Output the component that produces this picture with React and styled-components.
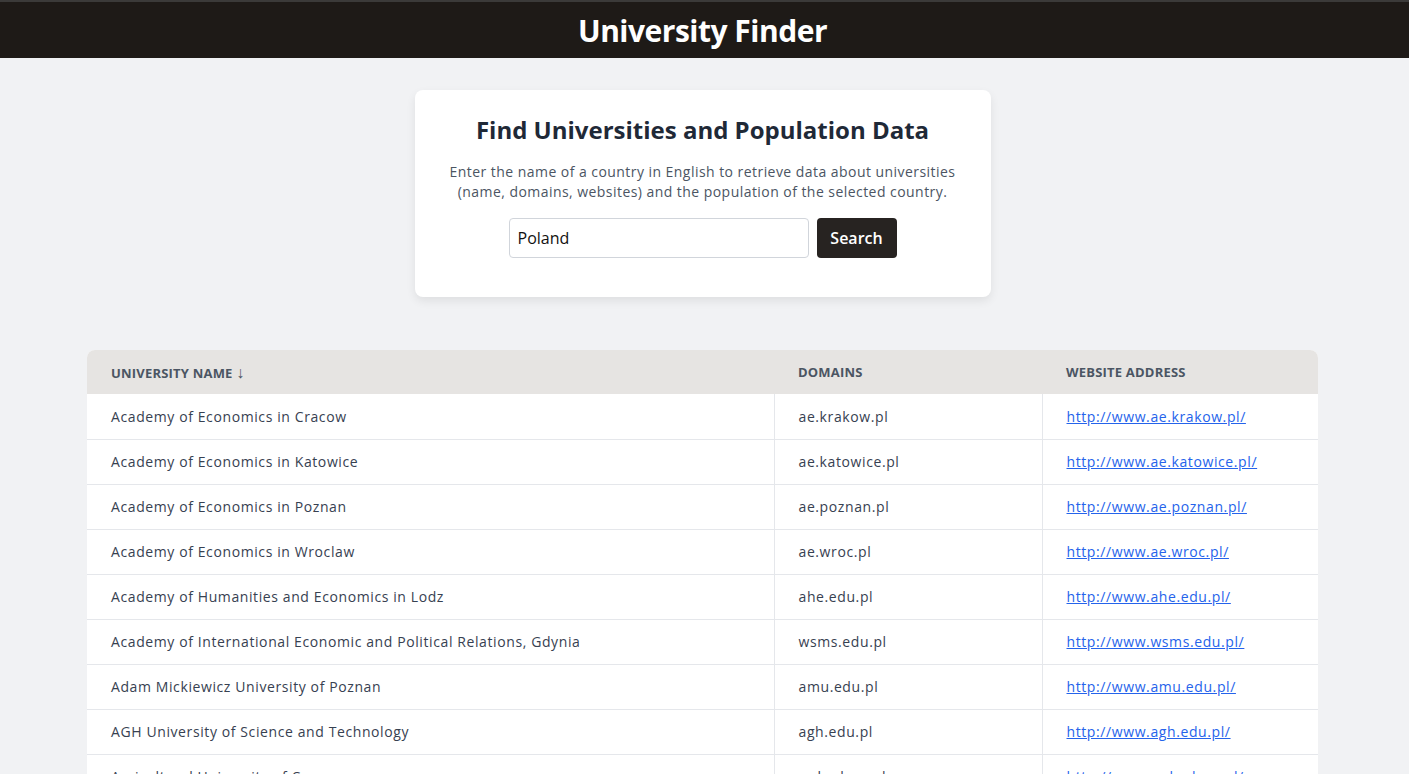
import styled, { createGlobalStyle } from "styled-components";

const GlobalStyle = createGlobalStyle`
  body {
    margin: 0;
    background: #f1f2f4;
    font-family: "Open Sans", "Liberation Sans", sans-serif;
    color: #374151;
  }
`;

const universities = [
  { name: "Academy of Economics in Cracow", domain: "ae.krakow.pl", web: "http://www.ae.krakow.pl/" },
  { name: "Academy of Economics in Katowice", domain: "ae.katowice.pl", web: "http://www.ae.katowice.pl/" },
  { name: "Academy of Economics in Poznan", domain: "ae.poznan.pl", web: "http://www.ae.poznan.pl/" },
  { name: "Academy of Economics in Wroclaw", domain: "ae.wroc.pl", web: "http://www.ae.wroc.pl/" },
  { name: "Academy of Humanities and Economics in Lodz", domain: "ahe.edu.pl", web: "http://www.ahe.edu.pl/" },
  { name: "Academy of International Economic and Political Relations, Gdynia", domain: "wsms.edu.pl", web: "http://www.wsms.edu.pl/" },
  { name: "Adam Mickiewicz University of Poznan", domain: "amu.edu.pl", web: "http://www.amu.edu.pl/" },
  { name: "AGH University of Science and Technology", domain: "agh.edu.pl", web: "http://www.agh.edu.pl/" },
  { name: "Agricultural University of Cracow", domain: "ar.krakow.pl", web: "http://www.ar.krakow.pl/" },
];

const App = () => {
  return (
    <>
      <GlobalStyle />
      <Header>
        <HeaderTitle>University Finder</HeaderTitle>
      </Header>
      <Main>
        <SearchCard>
          <CardTitle>Find Universities and Population Data</CardTitle>
          <CardText>
            Enter the name of a country in English to retrieve data about universities
            (name, domains, websites) and the population of the selected country.
          </CardText>
          <SearchForm onSubmit={(e) => e.preventDefault()}>
            <SearchInput defaultValue="Poland" />
            <SearchButton type="submit">Search</SearchButton>
          </SearchForm>
        </SearchCard>
        <TableWrap>
          <Table>
            <thead>
              <tr>
                <Th $w="687px">
                  University Name <SortArrow>↓</SortArrow>
                </Th>
                <Th $w="268px">Domains</Th>
                <Th>Website Address</Th>
              </tr>
            </thead>
            <tbody>
              {universities.map((u) => (
                <tr key={u.domain}>
                  <Td>{u.name}</Td>
                  <Td>{u.domain}</Td>
                  <Td>
                    <Link href={u.web}>{u.web}</Link>
                  </Td>
                </tr>
              ))}
            </tbody>
          </Table>
        </TableWrap>
      </Main>
    </>
  );
};

const Header = styled.header`
  height: 56px;
  border-top: 2px solid #3b3a39;
  background: #1e1a17;
  display: flex;
  align-items: center;
  justify-content: center;
  padding-right: 4px;
`;

const HeaderTitle = styled.h1`
  margin: 0;
  color: #fff;
  font-size: 30px;
  font-weight: 700;
  letter-spacing: -0.5px;
`;

const Main = styled.main`
  display: flex;
  flex-direction: column;
  align-items: center;
  padding-top: 32px;
  padding-right: 4px;
`;

const SearchCard = styled.section`
  width: 576px;
  height: 207px;
  box-sizing: border-box;
  background: #fff;
  border-radius: 8px;
  box-shadow: 0 4px 10px rgba(0, 0, 0, 0.08);
  padding: 24px 20px;
  text-align: center;
`;

const CardTitle = styled.h2`
  margin: 0 0 16px;
  font-size: 24px;
  font-weight: 700;
  color: #1f2937;
  line-height: 32px;
`;

const CardText = styled.p`
  margin: 0 0 16px;
  font-size: 14px;
  line-height: 20px;
  letter-spacing: 0.45px;
  color: #4b5563;
`;

const SearchForm = styled.form`
  display: flex;
  justify-content: center;
  gap: 8px;
`;

const SearchInput = styled.input`
  width: 300px;
  height: 40px;
  box-sizing: border-box;
  border: 1px solid #d1d5db;
  border-radius: 4px;
  padding: 0 8px;
  font-family: inherit;
  font-size: 16px;
  font-weight: 500;
  color: #111;
`;

const SearchButton = styled.button`
  width: 80px;
  height: 40px;
  border: none;
  border-radius: 4px;
  background: #272321;
  color: #fff;
  font-family: inherit;
  font-size: 16px;
  font-weight: 600;
  cursor: pointer;
`;

const TableWrap = styled.div`
  width: 1231px;
  margin-top: 53px;
  border-radius: 8px 8px 0 0;
  overflow: hidden;
`;

const Table = styled.table`
  width: 100%;
  border-collapse: collapse;
  background: #fff;
  font-size: 14px;
  letter-spacing: 0.6px;
`;

const Th = styled.th`
  width: ${(p) => p.$w || "auto"};
  height: 44px;
  padding: 0 24px;
  box-sizing: border-box;
  background: #e6e4e2;
  text-align: left;
  text-transform: uppercase;
  font-size: 13px;
  font-weight: 700;
  letter-spacing: 0.2px;
  color: #4b5563;
`;

const SortArrow = styled.span`
  font-size: 16px;
  font-weight: 400;
`;

const Td = styled.td`
  height: 45px;
  padding: 0 24px;
  box-sizing: border-box;
  border-bottom: 1px solid #e5e7eb;
  color: #374151;
  & + & {
    border-left: 1px solid #e5e7eb;
  }
`;

const Link = styled.a`
  color: #2563eb;
  text-decoration: underline;
`;

export default App;
